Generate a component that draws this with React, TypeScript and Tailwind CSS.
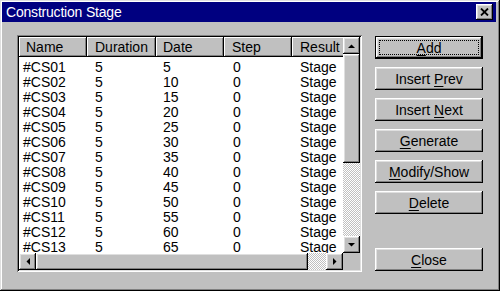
import React from 'react';

interface Stage {
  name: string;
  duration: number;
  date: number;
  step: number;
  result: string;
}

const stages: Stage[] = Array.from({ length: 13 }, (_, i) => ({
  name: `#CS${String(i + 1).padStart(2, '0')}`,
  duration: 5,
  date: (i + 1) * 5,
  step: 0,
  result: 'Stage',
}));

// win95 style bevels
const raised =
  'bg-[#c0c0c0] shadow-[inset_-1px_-1px_#000,inset_1px_1px_#fff,inset_-2px_-2px_#808080,inset_2px_2px_#dfdfdf]';
const headerBevel =
  'bg-[#c0c0c0] shadow-[inset_-1px_-1px_#000,inset_1px_1px_#fff,inset_-2px_-2px_#808080]';
const checker =
  'bg-[repeating-conic-gradient(#c0c0c0_0_25%,#ffffff_0_50%)] bg-[length:2px_2px]';

const Arrow = ({ dir }: { dir: 'up' | 'down' | 'left' | 'right' }) => {
  const pts = {
    up: '0,4 7,4 3.5,0.5',
    down: '0,0 7,0 3.5,3.5',
    left: '4,0 4,7 0.5,3.5',
    right: '0,0 0,7 3.5,3.5',
  }[dir];
  const vertical = dir === 'up' || dir === 'down';
  return (
    <svg width={vertical ? 7 : 4} height={vertical ? 4 : 7} className="block">
      <polygon points={pts} fill="#000" />
    </svg>
  );
};

const ScrollBtn = ({ dir }: { dir: 'up' | 'down' | 'left' | 'right' }) => (
  <div className={`w-[17px] h-[17px] shrink-0 flex items-center justify-center ${raised}`}>
    <Arrow dir={dir} />
  </div>
);

const Mn = ({ children }: { children: React.ReactNode }) => (
  <span className="underline underline-offset-[2px]">{children}</span>
);

const DlgButton = ({ children, className = '' }: { children: React.ReactNode; className?: string }) => (
  <button className={`w-[108px] h-[23px] flex items-center justify-center leading-none ${raised} ${className}`}>
    {children}
  </button>
);

const columns = [
  { label: 'Name', w: 'w-[68px]', head: 'pl-[7px]', cell: 'pl-[4px]' },
  { label: 'Duration', w: 'w-[69px]', head: 'pl-[8px]', cell: 'pl-[8px]' },
  { label: 'Date', w: 'w-[68px]', head: 'pl-[7px]', cell: 'pl-[7px]' },
  { label: 'Step', w: 'w-[68px]', head: 'pl-[8px]', cell: 'pl-[9px]' },
  { label: 'Result', w: 'w-[70px]', head: 'pl-[8px]', cell: 'pl-[8px]' },
];

export default function App() {
  return (
    <div className="w-[500px] h-[291px] bg-[#c0c0c0] pl-[2px] pt-[2px] pr-[4px] font-['Liberation_Sans',Arial,sans-serif] text-[14px] text-black shadow-[inset_-1px_-1px_#000,inset_1px_1px_#dfdfdf,inset_-2px_-2px_#808080,inset_2px_2px_#fff]">
      {/* title bar */}
      <div className="h-[20px] bg-[#000080] flex items-center justify-between pl-[4px] pr-[3px]">
        <span className="text-white tracking-[-0.2px] leading-none">Construction Stage</span>
        <div className={`w-[17px] h-[16px] flex items-center justify-center ${raised}`}>
          <svg width="9" height="8" className="block">
            <path d="M1 0.5 L8 7.5 M8 0.5 L1 7.5" stroke="#000" strokeWidth="1.8" />
          </svg>
        </div>
      </div>

      <div className="flex pl-[15px] pt-[13px]">
        {/* list */}
        <div className="w-[345px] h-[237px] p-[2px] bg-white shadow-[inset_1px_1px_#808080,inset_-1px_-1px_#fff,inset_2px_2px_#000,inset_-2px_-2px_#dfdfdf]">
          <div className="w-[341px] h-[233px] grid grid-cols-[324px_17px] grid-rows-[216px_17px]">
            <div className="overflow-hidden bg-white">
              <div className="flex h-[20px] w-max">
                {columns.map((c) => (
                  <div key={c.label} className={`${c.w} ${c.head} ${headerBevel} flex items-center leading-none`}>
                    {c.label}
                  </div>
                ))}
              </div>
              <div className="pt-[3px]">
                {stages.map((s) => (
                  <div key={s.name} className="flex h-[15px] leading-[15px] w-max">
                    <div className={`${columns[0].w} ${columns[0].cell}`}>{s.name}</div>
                    <div className={`${columns[1].w} ${columns[1].cell}`}>{s.duration}</div>
                    <div className={`${columns[2].w} ${columns[2].cell}`}>{s.date}</div>
                    <div className={`${columns[3].w} ${columns[3].cell}`}>{s.step}</div>
                    <div className={`${columns[4].w} ${columns[4].cell}`}>{s.result}</div>
                  </div>
                ))}
              </div>
            </div>

            {/* vertical scrollbar */}
            <div className="flex flex-col">
              <ScrollBtn dir="up" />
              <div className={`h-[109px] shrink-0 ${raised}`} />
              <div className={`flex-1 ${checker}`} />
              <ScrollBtn dir="down" />
            </div>

            {/* horizontal scrollbar */}
            <div className="flex">
              <ScrollBtn dir="left" />
              <div className={`w-[272px] shrink-0 ${raised}`} />
              <div className={`flex-1 ${checker}`} />
              <ScrollBtn dir="right" />
            </div>
            <div className="bg-[#c0c0c0]" />
          </div>
        </div>

        {/* buttons */}
        <div className="ml-[13px] mt-[1px] flex flex-col gap-[8px]">
          <div className="w-[108px] h-[23px] border border-black flex">
            <div className={`flex-1 flex p-[3px] ${raised}`}>
              <div className="flex-1 border border-dotted border-black flex items-center justify-center leading-none">
                <span>
                  <Mn>A</Mn>dd
                </span>
              </div>
            </div>
          </div>
          <DlgButton>
            <span>
              Insert <Mn>P</Mn>rev
            </span>
          </DlgButton>
          <DlgButton>
            <span>
              Insert <Mn>N</Mn>ext
            </span>
          </DlgButton>
          <DlgButton>
            <span>
              <Mn>G</Mn>enerate
            </span>
          </DlgButton>
          <DlgButton>
            <span>
              <Mn>M</Mn>odify/Show
            </span>
          </DlgButton>
          <DlgButton>
            <span>
              <Mn>D</Mn>elete
            </span>
          </DlgButton>
          <DlgButton className="mt-[26px]">
            <span>
              <Mn>C</Mn>lose
            </span>
          </DlgButton>
        </div>
      </div>
    </div>
  );
}
